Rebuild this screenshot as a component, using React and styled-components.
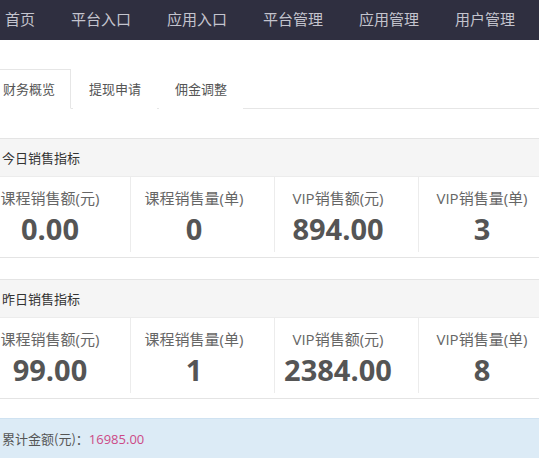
import React, { useState } from "react";
import styled, { createGlobalStyle } from "styled-components";

const GlobalStyle = createGlobalStyle`
  html, body {
    margin: 0;
    padding: 0;
    background: #ffffff;
  }
  body {
    font-family: "Open Sans", "Noto Sans CJK SC", sans-serif;
  }
`;

const Page = styled.div`
  width: 100%;
  overflow: hidden;
`;

const NavBar = styled.div`
  height: 40px;
  background: #2f2f40;
  display: flex;
  align-items: center;
  gap: 36px;
  padding-left: 5px;
  padding-bottom: 4px;
  box-sizing: border-box;
`;

const NavItem = styled.span`
  font-family: "Noto Sans CJK SC", sans-serif;
  font-size: 15px;
  color: #c4c4ce;
  white-space: nowrap;
`;

const Content = styled.div`
  margin-left: -13px;
  width: 580px;
  padding-top: 29px;
`;

const TabBar = styled.div`
  display: flex;
  border-bottom: 1px solid #e6e6e6;
  height: 39px;
`;

const Tab = styled.div`
  font-family: "Noto Sans CJK SC", sans-serif;
  font-size: 13px;
  color: #555;
  padding: 0 15px 2px;
  margin-right: 2px;
  display: flex;
  align-items: center;
  box-sizing: border-box;
  height: 40px;
  cursor: pointer;
  border: 1px solid ${(p) => (p.active ? "#e6e6e6" : "transparent")};
  border-bottom-color: ${(p) => (p.active ? "#fff" : "transparent")};
  background: #fff;
`;

const Panel = styled.div`
  margin-top: ${(p) => p.top || 0}px;
  border-top: 1px solid #e4e4e4;
  border-bottom: 1px solid #e4e4e4;
`;

const PanelHead = styled.div`
  height: 38px;
  background: #f5f5f5;
  border-bottom: 1px solid #ececec;
  display: flex;
  align-items: center;
  padding: 0 0 1px 15px;
  box-sizing: border-box;
  font-family: "Noto Sans CJK SC", sans-serif;
  font-size: 13px;
  color: #333;
`;

const StatRow = styled.div`
  display: grid;
  grid-template-columns: repeat(4, 144px);
  height: 80px;
  background: #fff;
`;

const StatCell = styled.div`
  display: flex;
  flex-direction: column;
  align-items: center;
  padding: 10px 17px 6px 0;
  border-right: 1px solid #ececec;
  margin: 0 0 6px;
`;

const StatLabel = styled.div`
  font-size: 15px;
  line-height: 22px;
  color: #666;
  white-space: nowrap;
`;

const StatValue = styled.div`
  font-size: 29px;
  line-height: 34px;
  margin-top: 3px;
  font-weight: 700;
  color: #555;
`;

const Summary = styled.div`
  margin-top: 19px;
  height: 39px;
  background: #dcebf6;
  border-top: 1px solid #cfe2f1;
  display: flex;
  align-items: center;
  padding-left: 15px;
  font-family: "Noto Sans CJK SC", sans-serif;
  font-size: 13px;
  color: #555;
`;

const Amount = styled.span`
  color: #cc4a86;
  font-family: "Open Sans", sans-serif;
`;

const navs = ["首页", "平台入口", "应用入口", "平台管理", "应用管理", "用户管理"];
const tabs = ["财务概览", "提现申请", "佣金调整"];

const panels = [
  {
    title: "今日销售指标",
    top: 29,
    stats: [
      ["课程销售额(元)", "0.00"],
      ["课程销售量(单)", "0"],
      ["VIP销售额(元)", "894.00"],
      ["VIP销售量(单)", "3"],
    ],
  },
  {
    title: "昨日销售指标",
    top: 21,
    stats: [
      ["课程销售额(元)", "99.00"],
      ["课程销售量(单)", "1"],
      ["VIP销售额(元)", "2384.00"],
      ["VIP销售量(单)", "8"],
    ],
  },
];

const App = () => {
  const [tab, setTab] = useState(0);

  return (
    <Page>
      <GlobalStyle />
      <NavBar>
        {navs.map((n) => (
          <NavItem key={n}>{n}</NavItem>
        ))}
      </NavBar>
      <Content>
        <TabBar>
          {tabs.map((t, i) => (
            <Tab key={t} active={i === tab} onClick={() => setTab(i)}>
              {t}
            </Tab>
          ))}
        </TabBar>
        {panels.map((p) => (
          <Panel key={p.title} top={p.top}>
            <PanelHead>{p.title}</PanelHead>
            <StatRow>
              {p.stats.map(([label, value]) => (
                <StatCell key={label}>
                  <StatLabel>{label}</StatLabel>
                  <StatValue>{value}</StatValue>
                </StatCell>
              ))}
            </StatRow>
          </Panel>
        ))}
        <Summary>
          累计金额(元)：<Amount>16985.00</Amount>
        </Summary>
      </Content>
    </Page>
  );
};

export default App;
